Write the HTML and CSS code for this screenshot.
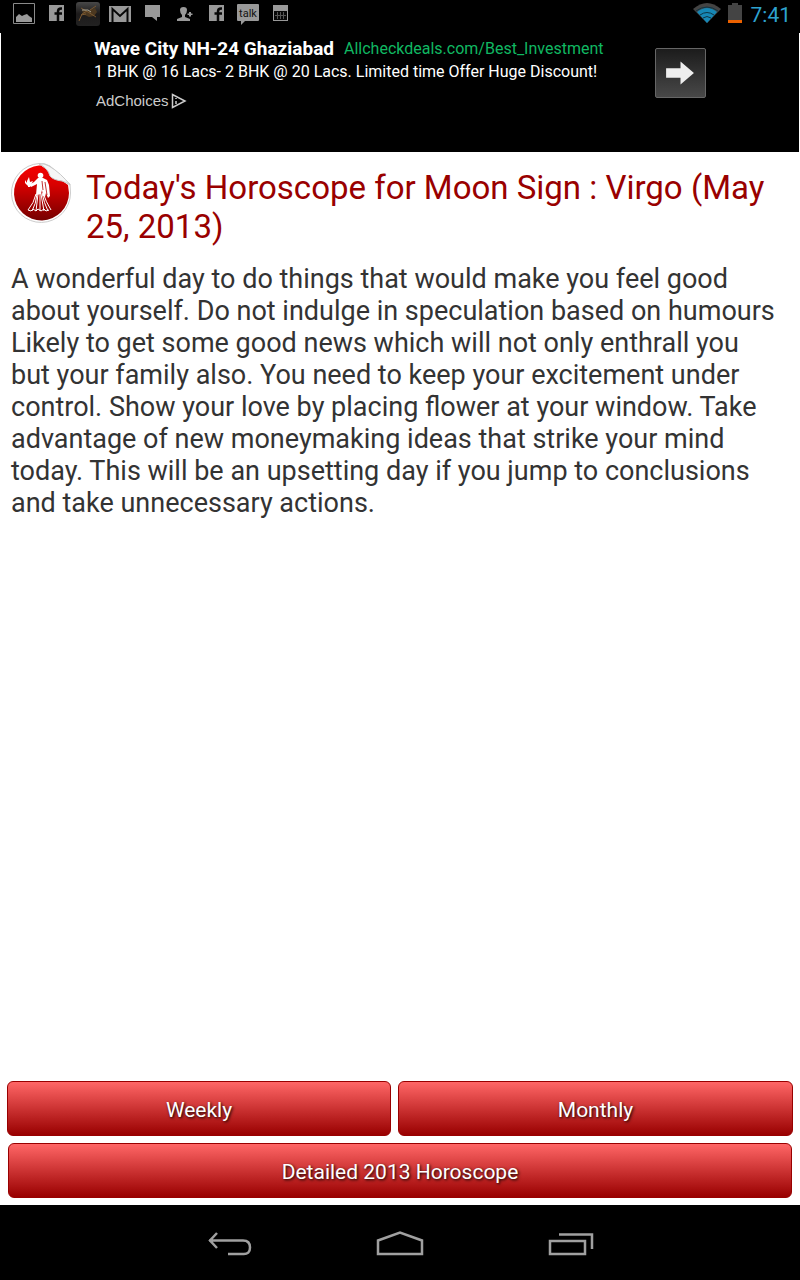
FILE: index.html
```html
<!DOCTYPE html>
<html lang="en">
<head>
<meta charset="utf-8">
<meta name="viewport" content="width=device-width, initial-scale=1">
<title>Today's Horoscope</title>
<link rel="stylesheet" href="styles.css">
</head>
<body>
<header class="status">
  <div class="notices">
    <svg class="notice" viewBox="0 0 24 28"><path d="M1.500 3.500h21v20h-21z" fill="none" stroke="#8a8a8a"/><path d="M4 22v-5l3-3 3 2 2-1 3-1 2 2 3 2v4z" fill="#999"/></svg>
    <svg class="notice" viewBox="0 0 24 28"><path fill="#999" d="M5 5h15v16H5z"/><path fill="none" stroke="#080808" stroke-width="2.500" d="M18 8.500h-1q-3 0-3 3V21M10.500 13.500H18"/></svg>
    <svg class="notice" viewBox="0 0 24 28"><defs><linearGradient id="photo" x2="0" y2="1"><stop stop-color="#484848"/><stop offset=".5" stop-color="#1c1a1a"/><stop offset="1" stop-color="#222"/></linearGradient></defs><rect y="2" width="24" height="24" rx="3" fill="url(#photo)"/><path d="M6 10l6 1 7-3 2 4-3 4-5 1-6-3z" fill="#4c3820"/><path d="M3 21l3-7 5-3M5 8l7 4 8 5M14 10l6-4M10 14l-5 1" fill="none" stroke="#7a5830"/><path d="M6 10l6 0 3 2" fill="none" stroke="#aaa594"/></svg>
    <svg class="notice" viewBox="0 0 24 28"><path fill="#999" d="M1 6h22v16H1z"/><path d="M4.500 22V9l7.500 7 7.500-7v13" fill="none" stroke="#080808" stroke-width="2"/></svg>
    <svg class="notice" viewBox="0 0 24 28"><path fill="#999" d="M5 5h15v12h-3v4l-5-4H5z"/></svg>
    <svg class="notice" viewBox="0 0 24 28"><path fill="#999" d="M5 21v-2l5-2v-2q-2-2-2-5 0-3 3.500-3T15 10q0 3-2 5v2l5 2v2zM17 12h2v1.500h1.500v1.500H19v1.500h-2V15h-1.500v-1.500H17z"/></svg>
    <svg class="notice" viewBox="0 0 24 28"><path fill="#999" d="M5 5h15v16H5z"/><path fill="none" stroke="#080808" stroke-width="2.500" d="M18 8.500h-1q-3 0-3 3V21M10.500 13.500H18"/></svg>
    <svg class="notice" viewBox="0 0 24 28"><path fill="#999" d="M2 4h20q1 0 1 1v15q0 1-1 1H9l-4 4v-4H2q-1 0-1-1V5q0-1 1-1z"/><text class="talk" x="12" y="17" text-anchor="middle">talk</text></svg>
    <svg class="notice" viewBox="0 0 24 28"><path fill="#999" d="M5 5h15v16H5z"/><path fill="#080808" d="M6 11h13v9H6z"/><path d="M9.500 12v7M12.500 12v7M15.500 12v7M7 15.500h11" stroke="#555"/></svg>
  </div>
  <div class="system">
    <svg class="wifi" viewBox="0 0 28 28"><path fill="#444" d="M0 9Q14-3 28 9L14 23z"/><path fill="#1687b5" d="M4 12q10-8 20 0L14 23z"/><path d="M3 11q11-8 22 0M7 15q7-5 14 0M10 18q4-3 8 0" fill="none" stroke="#0d3444"/></svg>
    <svg class="battery" viewBox="0 0 14 28"><path fill="#444" d="M0 5h4V3h6v2h4v15H0z"/><path fill="#eb6100" d="M0 20h14v3H0z"/></svg>
    <time class="clock">7:41</time>
  </div>
</header>
<main class="page">
  <aside class="ad">
    <div class="ad-copy">
      <div class="ad-head"><strong class="ad-title">Wave City NH-24 Ghaziabad</strong><a class="ad-link" href="#">Allcheckdeals.com/Best_Investment</a></div>
      <div class="ad-text">1 BHK @ 16 Lacs- 2 BHK @ 20 Lacs. Limited time Offer Huge Discount!</div>
      <a class="choices" href="#">AdChoices <svg class="choices-icon" viewBox="0 0 16 16"><path d="M1.500 1.500v13L14 8zM5 5v1M5 8v3" fill="none" stroke="#ccc" stroke-width="1.500"/></svg></a>
    </div>
    <button class="ad-go" aria-label="Open advertisement"><svg class="ad-arrow" viewBox="0 0 50 50"><path fill="#eee" d="M10 20h15v-7l14 12-14 12v-7H10z"/></svg></button>
  </aside>
  <article class="reading">
    <div class="title-row">
      <svg class="sign" viewBox="0 0 62 62"><defs><linearGradient id="disc" x2="0" y2="1"><stop stop-color="#f50000"/><stop offset=".35" stop-color="#d80000"/><stop offset="1" stop-color="#760000"/></linearGradient></defs>
        <path d="M29 1.500A29.500 29.500 0 1 0 60.500 31L60 22 40 4Q35 1 29 1.500z" fill="#fff" stroke="#ccc"/>
        <path d="M29 3.500A27.500 27.500 0 1 0 59 31L58 23 31 3.500z" fill="url(#disc)"/>
        <path d="M29 2q5-1 10 2 12 7 21 19-4-3-8-4-9-1-12-5-2-8-11-12z" fill="#f6f6f6" stroke="#c8c8c8"/>
        <circle cx="30.500" cy="13.500" r="2.800" fill="#fff"/>
        <path d="M28 16h5l4 2 2 5 1 11-2 2-2-5-1 4-2-1-1-6-1 4-5 1 1-11-6 3-2-2 5-3z" fill="#fff"/>
        <path d="M15 18l2 3v-2l2-4 1 5 3-1-2 4-3 1-3-3zM18 23h2v2h-2z" fill="#fff"/>
        <path d="M26 32q-2 9-8 16M27 32q-1 10-5 17M28 32l-2 17M30 32v17M31 32l3 17M32 31q2 10 6 18M33 31q3 9 8 17M18 48l3 1 2-2 3 2 2-2 3 2 3-2 2 2 3-1" fill="none" stroke="#fff"/>
        <path d="M35 20l2 13M32 19l1 9" fill="none" stroke="#b00000" stroke-width=".8"/>
      </svg>
      <h1 class="title">Today's Horoscope for Moon Sign : Virgo (May 25, 2013)</h1>
    </div>
    <p class="text">A wonderful day to do things that would make you feel good about yourself. Do not indulge in speculation based on humours Likely to get some good news which will not only enthrall you but your family also. You need to keep your excitement under control. Show your love by placing flower at your window. Take advantage of new moneymaking ideas that strike your mind today. This will be an upsetting day if you jump to conclusions and take unnecessary actions.</p>
  </article>
  <div class="actions">
    <div class="pair"><button class="red weekly">Weekly</button><button class="red monthly">Monthly</button></div>
    <button class="red wide">Detailed 2013 Horoscope</button>
  </div>
</main>
<nav class="navbar">
  <button class="nav-button" aria-label="Back"><svg class="nav-icon" viewBox="0 0 48 32"><path d="M4 9.500h34q7 0 7 7t-7 6.500H23M12 2l-7 7.500 7 7.500" fill="none" stroke="#a0a0a0" stroke-width="2.500"/></svg></button>
  <button class="nav-button" aria-label="Home"><svg class="nav-icon" viewBox="0 0 48 32"><path d="M2 9.500L24 1.500l22 8V23H2z" fill="none" stroke="#a0a0a0" stroke-width="2.500"/></svg></button>
  <button class="nav-button" aria-label="Recent apps"><svg class="nav-icon" viewBox="0 0 48 32"><path d="M3 10h35v13H3zM12 3.500h33V18" fill="none" stroke="#a0a0a0" stroke-width="2.500"/></svg></button>
</nav>
</body>
</html>
```
FILE: styles.css
```css
* { box-sizing: border-box; }
body {
  margin: 0;
  min-height: 100vh;
  display: flex;
  flex-direction: column;
  background: #000;
  font-family: Roboto, "Liberation Sans", sans-serif;
}
button { font: inherit; padding: 0; cursor: pointer; }
svg { display: block; flex: none; }
.status {
  height: 33px;
  padding: 0 9px 0 12px;
  display: flex;
  justify-content: space-between;
  align-items: flex-start;
}
.notices { display: flex; gap: 8px; }
.notice { width: 24px; height: 28px; }
.talk { font: 11px Roboto, sans-serif; fill: #111; }
.system { display: flex; align-items: flex-start; gap: 7px; }
.wifi { width: 28px; height: 28px; }
.battery { width: 14px; height: 28px; }
.clock { margin-left: 2px; font-size: 21px; line-height: 30px; color: #33b5e5; opacity: .9; }
.page {
  flex: 1;
  display: flex;
  flex-direction: column;
  background: #fff;
}
.ad {
  margin: 0 1px;
  padding: 4px 93px 0;
  height: 119px;
  display: flex;
  justify-content: space-between;
  background: #000;
  color: #fff;
}
.ad-head { display: flex; gap: 10px; align-items: center; line-height: 23px; }
.ad-title { font-size: 19px; }
.ad-link { font-size: 16px; color: #10b862; text-decoration: none; }
.ad-text { font-size: 16px; line-height: 24px; }
.choices {
  display: flex;
  align-items: center;
  gap: 2px;
  width: max-content;
  margin: 9px 0 0 2px;
  font: 15px/16px "Liberation Sans", sans-serif;
  color: #ccc;
  text-decoration: none;
}
.choices-icon { width: 16px; height: 16px; }
.ad-go {
  width: 51px;
  height: 50px;
  margin-top: 11px;
  border: 1px solid #666;
  border-radius: 2px;
  background: linear-gradient(#1c1c1c, #484848);
}
.ad-arrow { width: 49px; height: 48px; }
.reading { flex: 1; padding: 10px; }
.title-row { display: flex; gap: 14px; }
.sign { width: 62px; height: 62px; }
.title { margin: 6px 0 0; font-size: 33px; font-weight: 400; line-height: 39px; color: #900; }
.text { margin: 17px 10px 0 1px; font-size: 27px; line-height: 32px; color: #333; }
.actions { padding: 0 7px 7px; display: flex; flex-direction: column; gap: 7px; }
.pair { display: flex; gap: 7px; }
.red {
  height: 55px;
  padding-top: 2px;
  border: 1px solid #900;
  border-radius: 6px;
  background: linear-gradient(#f66, #900);
  color: #fff;
  font-size: 21px;
  text-shadow: 1px 1px 3px #000;
}
.weekly { flex: 384; }
.monthly { flex: 395; }
.wide { margin: 0 1px; }
.navbar {
  height: 75px;
  padding: 8px 144px 0;
  display: flex;
  align-items: center;
}
.nav-button { flex: 1; height: 60px; border: 0; background: none; display: flex; justify-content: center; align-items: center; }
.nav-icon { width: 48px; height: 32px; }
```
